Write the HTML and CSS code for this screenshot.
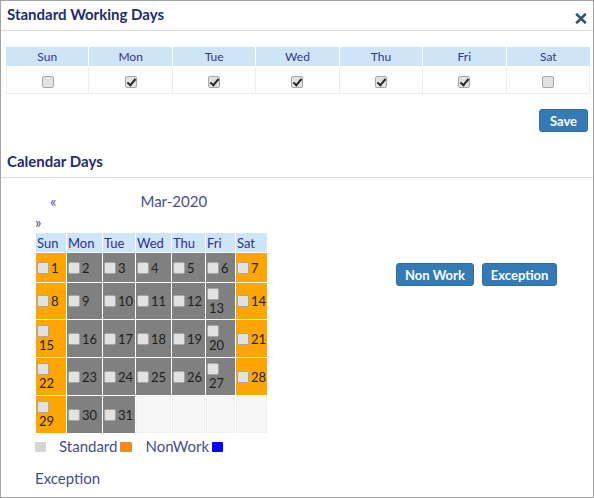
FILE: index.html
```html
<!DOCTYPE html>
<html>
<head>
<meta charset="utf-8">
<title>Standard Working Days</title>
<link rel="stylesheet" href="styles.css">
</head>
<body>
<div class="modal">
  <div class="modal-header">
    <h2 class="title">Standard Working Days</h2>
    <button class="close" aria-label="Close">
      <svg width="12" height="11" viewBox="0 0 12 11"><path d="M1.2 0.8 L10.8 10.2 M10.8 0.8 L1.2 10.2" stroke="#2d5573" stroke-width="2.6" fill="none"/></svg>
    </button>
  </div>

  <div class="week-section">
    <table class="week-table">
      <thead>
        <tr><th>Sun</th><th>Mon</th><th>Tue</th><th>Wed</th><th>Thu</th><th>Fri</th><th>Sat</th></tr>
      </thead>
      <tbody>
        <tr>
          <td><span class="cb"></span></td>
          <td><span class="cb checked"></span></td>
          <td><span class="cb checked"></span></td>
          <td><span class="cb checked"></span></td>
          <td><span class="cb checked"></span></td>
          <td><span class="cb checked"></span></td>
          <td><span class="cb"></span></td>
        </tr>
      </tbody>
    </table>
    <div class="save-row"><button class="btn">Save</button></div>
  </div>

  <h2 class="title section-title">Calendar Days</h2>

  <div class="cal-section">
    <div class="cal-left">
      <div class="cal-nav">
        <span class="prev">«</span><span class="month">Mar-2020</span>
        <div class="next">»</div>
      </div>
      <div class="cal-grid">
        <div class="dh">Sun</div><div class="dh">Mon</div><div class="dh">Tue</div><div class="dh">Wed</div><div class="dh">Thu</div><div class="dh">Fri</div><div class="dh">Sat</div>

        <div class="day nw"><span class="cb"></span><span class="n">1</span></div>
        <div class="day st"><span class="cb"></span><span class="n">2</span></div>
        <div class="day st"><span class="cb"></span><span class="n">3</span></div>
        <div class="day st"><span class="cb"></span><span class="n">4</span></div>
        <div class="day st"><span class="cb"></span><span class="n">5</span></div>
        <div class="day st"><span class="cb"></span><span class="n">6</span></div>
        <div class="day nw"><span class="cb"></span><span class="n">7</span></div>

        <div class="day nw"><span class="cb"></span><span class="n">8</span></div>
        <div class="day st"><span class="cb"></span><span class="n">9</span></div>
        <div class="day st"><span class="cb"></span><span class="n">10</span></div>
        <div class="day st"><span class="cb"></span><span class="n">11</span></div>
        <div class="day st"><span class="cb"></span><span class="n">12</span></div>
        <div class="day st stack"><span class="cb"></span><span class="n">13</span></div>
        <div class="day nw"><span class="cb"></span><span class="n">14</span></div>

        <div class="day nw stack"><span class="cb"></span><span class="n">15</span></div>
        <div class="day st"><span class="cb"></span><span class="n">16</span></div>
        <div class="day st"><span class="cb"></span><span class="n">17</span></div>
        <div class="day st"><span class="cb"></span><span class="n">18</span></div>
        <div class="day st"><span class="cb"></span><span class="n">19</span></div>
        <div class="day st stack"><span class="cb"></span><span class="n">20</span></div>
        <div class="day nw"><span class="cb"></span><span class="n">21</span></div>

        <div class="day nw stack"><span class="cb"></span><span class="n">22</span></div>
        <div class="day st"><span class="cb"></span><span class="n">23</span></div>
        <div class="day st"><span class="cb"></span><span class="n">24</span></div>
        <div class="day st"><span class="cb"></span><span class="n">25</span></div>
        <div class="day st"><span class="cb"></span><span class="n">26</span></div>
        <div class="day st stack"><span class="cb"></span><span class="n">27</span></div>
        <div class="day nw"><span class="cb"></span><span class="n">28</span></div>

        <div class="day nw stack"><span class="cb"></span><span class="n">29</span></div>
        <div class="day st"><span class="cb"></span><span class="n">30</span></div>
        <div class="day st"><span class="cb"></span><span class="n">31</span></div>
        <div class="day empty"></div>
        <div class="day empty"></div>
        <div class="day empty"></div>
        <div class="day empty"></div>
      </div>
      <div class="legend">
        <span class="sq sq-standard"></span><span class="lbl">Standard</span><span class="sq sq-nonwork"></span><span class="lbl">NonWork</span><span class="sq sq-exception"></span>
      </div>
      <div class="legend legend-last"><span class="lbl">Exception</span></div>
    </div>
    <div class="cal-actions">
      <button class="btn">Non Work</button>
      <button class="btn">Exception</button>
    </div>
  </div>
</div>
</body>
</html>
```

FILE: styles.css
```css
* { box-sizing: border-box; }

html, body {
  margin: 0;
  padding: 0;
  background: #fff;
}

body {
  font-family: "Lato", "Open Sans", sans-serif;
  font-size: 14px;
  color: #2b2f7a;
}

.modal {
  width: 594px;
  height: 498px;
  border: 1px solid #a3a3a3;
  background: #fff;
  overflow: hidden;
}

.modal-header {
  display: flex;
  justify-content: space-between;
  align-items: flex-start;
  height: 30px;
  padding: 4px 6px 0 6px;
  border-bottom: 1px solid #dcdcdc;
}

.title {
  margin: 0;
  font-size: 15px;
  line-height: 18px;
  font-weight: 700;
  color: #262a6e;
}

.close {
  border: 0;
  background: transparent;
  padding: 0;
  margin-top: 8px;
  width: 12px;
  height: 11px;
  display: block;
}
.close svg { display: block; }

.week-section {
  padding: 16px 3px 0 5px;
}

.week-table {
  width: 584px;
  border-collapse: separate;
  border-spacing: 0;
  table-layout: fixed;
}

.week-table th {
  height: 19px;
  padding: 0;
  background: #cde5f7;
  border-right: 1px solid #fff;
  font-size: 12px;
  font-weight: 400;
  color: #32368a;
  text-align: center;
  vertical-align: middle;
}
.week-table th:last-child { border-right: 0; }

.week-table td {
  height: 28px;
  padding: 0;
  border-top: 2px solid #fff;
  border-right: 1px solid #ececec;
  border-bottom: 1px solid #ececec;
  text-align: center;
  vertical-align: middle;
}
.week-table td:first-child { border-left: 1px solid #ececec; }

.week-table .cb {
  display: inline-block;
  vertical-align: middle;
}

.cb {
  position: relative;
  width: 12px;
  height: 12px;
  border: 1px solid #a6a6a6;
  border-radius: 2px;
  background: #e2e2e2;
  flex: none;
}

.cb.checked::after {
  content: "";
  position: absolute;
  left: 3px;
  top: 0px;
  width: 3px;
  height: 7px;
  border-right: 2px solid #2a2a2a;
  border-bottom: 2px solid #2a2a2a;
  transform: rotate(40deg);
}

.save-row {
  display: flex;
  justify-content: flex-end;
  padding: 15px 2px 0 0;
}

.btn {
  font-family: "Lato", "Open Sans", sans-serif;
  font-size: 13px;
  font-weight: 700;
  color: #fff;
  background: #337ab7;
  border: 1px solid #2e6da4;
  border-radius: 3px;
  height: 23px;
  padding: 0 10px;
  line-height: 20px;
}

.section-title {
  margin-top: 20px;
  padding: 0 6px 7px 6px;
  border-bottom: 1px solid #dcdcdc;
}

.cal-section {
  display: flex;
}

.cal-left {
  width: 395px;
}

.cal-nav {
  margin-top: 13px;
  padding-left: 34px;
  line-height: 21px;
  font-size: 15px;
  color: #4a4e93;
}

.prev {
  margin-left: 15px;
}

.month {
  margin-left: 84px;
}

.next {
  line-height: 21px;
}

.cal-grid {
  margin: 0 0 0 35px;
  display: grid;
  grid-template-columns: 30px 35px 32px 35px 33px 29px 31px;
  grid-template-rows: 19px 29px 36px 37px 37px 37px;
  gap: 1px;
  width: 231px;
}

.dh {
  background: #cde5f7;
  font-size: 13px;
  color: #2e3290;
  display: flex;
  align-items: center;
  padding-left: 1px;
}

.day {
  display: flex;
  align-items: center;
  gap: 2px;
  padding-left: 1px;
  font-size: 13px;
  color: #1e1e1e;
}

.day.stack {
  flex-direction: column;
  align-items: flex-start;
  justify-content: flex-start;
  gap: 0;
  padding-top: 5px;
}

.day.stack .n {
  margin-left: 2px;
  line-height: 17px;
}

.nw { background: #ffa500; }
.st { background: #808080; }
.empty {
  background: #f7f7f7;
  border: 1px solid #f0f0f0;
}

.legend {
  margin-top: 4px;
  padding-left: 34px;
  font-size: 15px;
  line-height: 18px;
  color: #474b90;
}

.legend-last {
  margin-top: 14px;
}

.sq {
  display: inline-block;
  width: 11px;
  height: 10px;
  border-radius: 1px;
  vertical-align: baseline;
  margin-right: 13px;
}
.sq-standard { background: #d3d3d3; }
.sq-nonwork { background: #f08a1c; width: 12px; }
.sq-exception { background: #0000ff; margin-right: 0; }

.lbl { margin-right: 3px; }

.cal-actions {
  display: flex;
  gap: 8px;
  padding-top: 85px;
  align-items: flex-start;
}

.cal-actions .btn {
  padding: 0 8px;
}
```
